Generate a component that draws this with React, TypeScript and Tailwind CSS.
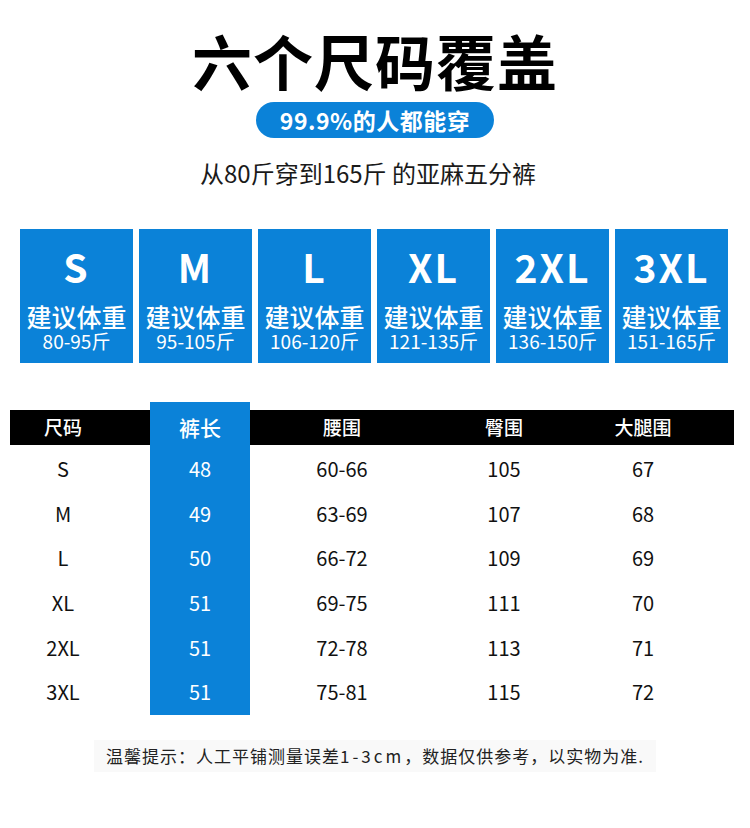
const sizes = [
  { name: "S", range: "80-95斤" },
  { name: "M", range: "95-105斤" },
  { name: "L", range: "106-120斤" },
  { name: "XL", range: "121-135斤" },
  { name: "2XL", range: "136-150斤" },
  { name: "3XL", range: "151-165斤" },
]

const rows = [
  ["S", "48", "60-66", "105", "67"],
  ["M", "49", "63-69", "107", "68"],
  ["L", "50", "66-72", "109", "69"],
  ["XL", "51", "69-75", "111", "70"],
  ["2XL", "51", "72-78", "113", "71"],
  ["3XL", "51", "75-81", "115", "72"],
]

const columns = [
  { title: "尺码", width: "w-[140px]", pad: "pr-[34px]", blue: false },
  { title: "裤长", width: "w-[100px]", pad: "", blue: true },
  { title: "腰围", width: "w-[184px]", pad: "", blue: false },
  { title: "臀围", width: "w-[140px]", pad: "", blue: false },
  { title: "大腿围", width: "w-[160px]", pad: "pr-[22px]", blue: false },
]

export default function App() {
  return (
    <div
      className="w-[750px] h-[828px] bg-white overflow-hidden flex flex-col items-center"
      style={{ fontFamily: '"Noto Sans CJK SC", "Noto Sans", sans-serif' }}
    >
      {/* Heading */}
      <h1 className="mt-[27px] text-[60px] leading-[66px] font-bold text-black tracking-[1px]">
        六个尺码覆盖
      </h1>
      <div className="mt-[9px] h-[36px] w-[238px] rounded-full bg-[#0b82d8] flex items-center justify-center text-white text-[23px] font-bold tracking-[0.5px]">
        99.9%的人都能穿
      </div>
      <p className="mt-[20px] pr-[14px] text-[24px] leading-[30px] text-[#1a1a1a]">
        从80斤穿到165斤 的亚麻五分裤
      </p>

      {/* Size cards */}
      <div className="mt-[41px] w-[750px] pl-[20px] pr-[22px]">
        <div className="grid grid-cols-6 gap-[6px]">
          {sizes.map((s) => (
            <div
              key={s.name}
              className="h-[134px] bg-[#0b82d8] flex flex-col items-center text-white"
            >
              <div className="mt-[17px] text-[39px] leading-[40px] font-bold tracking-[2px]">
                {s.name}
              </div>
              <div className="mt-[17px] text-[25px] leading-[26px] font-medium whitespace-nowrap">
                建议体重
              </div>
              <div className="mt-[1px] text-[19px] leading-[22px] whitespace-nowrap">{s.range}</div>
            </div>
          ))}
        </div>
      </div>

      {/* Size table */}
      <div className="mt-[39px] w-[750px] pl-[10px] flex">
        {columns.map((col, ci) => (
          <div
            key={col.title}
            className={`${col.width} flex flex-col ${col.blue ? "bg-[#0b82d8] text-white" : "text-[#111]"}`}
          >
            <div className="h-[8px]" />
            <div
              className={`h-[35px] ${col.pad} flex items-center justify-center text-white font-medium ${
                col.blue ? "text-[21px]" : "bg-black text-[19px]"
              }`}
            >
              {col.title}
            </div>
            <div className="h-[2px]" />
            {rows.map((r, ri) => (
              <div
                key={ri}
                className={`h-[44.6px] ${col.pad} flex items-center justify-center text-[20px]`}
              >
                {r[ci]}
              </div>
            ))}
          </div>
        ))}
      </div>

      {/* Note */}
      <div className="mt-[25px] h-[32px] px-[12px] bg-[#f9f9f9] flex items-center text-[17px] text-[#222] tracking-[1px]">
        温馨提示：人工平铺测量误差<span className="tracking-[3px]">1-3cm</span>，数据仅供参考，以实物为准.
      </div>
    </div>
  )
}
